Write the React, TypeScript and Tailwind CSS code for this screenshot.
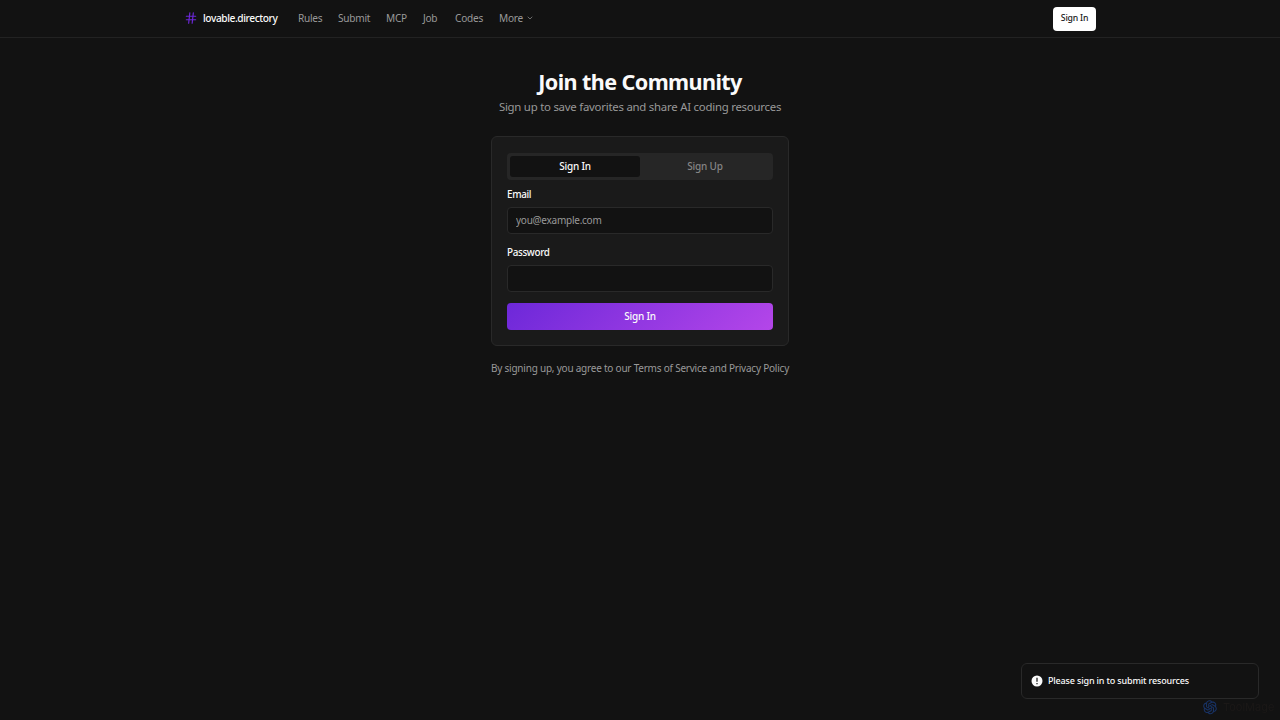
import { ChevronDown, Hash } from "lucide-react"
import { AiOutlineOpenAI } from "react-icons/ai"

const navLinks = [
  { label: "Rules", width: "w-[24px]" },
  { label: "Submit", width: "w-[32px]" },
  { label: "MCP", width: "w-[21px]" },
  { label: "Job", width: "w-[16px]" },
  { label: "Codes", width: "w-[28px]" },
]

const Header = () => (
  <header className="h-[38px] border-b border-[#222222]">
    <div className="mx-auto flex h-[37px] w-[912px] items-center">
      <div className="flex items-center gap-[5px]">
        <Hash className="h-[14px] w-[14px] text-[#6d28d9]" strokeWidth={2} />
        <span className="w-[75px] whitespace-nowrap text-[10.2px] font-medium tracking-[-0.42px] text-[#fafafa]">
          lovable.directory
        </span>
      </div>
      <nav className="ml-[20px] flex items-center gap-[16px] text-[10.1px] tracking-[-0.25px] text-[#999999]">
        {navLinks.map((link) => (
          <a key={link.label} className={`${link.width} whitespace-nowrap`}>
            {link.label}
          </a>
        ))}
        <a className="flex items-center gap-[3px] whitespace-nowrap">
          More
          <ChevronDown className="h-[8px] w-[8px]" strokeWidth={2} />
        </a>
      </nav>
      <button className="ml-auto h-[24px] w-[43px] rounded-[4px] bg-white text-[8.7px] font-medium tracking-[-0.2px] text-[#171717]">
        Sign In
      </button>
    </div>
  </header>
)

const Field = ({ label, type, placeholder }: { label: string; type: string; placeholder?: string }) => (
  <label className="block">
    <span className="block h-[14px] text-[9.9px] leading-[14px] font-medium tracking-[-0.35px] text-[#fafafa]">{label}</span>
    <input
      type={type}
      placeholder={placeholder}
      className="mt-[6px] block h-[27px] w-full rounded-[4px] border border-[#292929] bg-[#121212] px-2 pb-[2px] text-[10px] tracking-[-0.25px] text-[#fafafa] placeholder:text-[#999999]"
    />
  </label>
)

const LoginCard = () => (
  <div className="mt-[20px] h-[210px] w-[298.67px] rounded-[6px] border border-[#292929] bg-[#1a1a1a] px-[15.33px] pt-[16px]">
    <div className="grid h-[27px] grid-cols-2 rounded-[4px] bg-[#262626] p-[3px] text-[10px] font-medium tracking-[-0.22px]">
      <button className="rounded-[3px] bg-[#121212] text-[#fafafa]">Sign In</button>
      <button className="text-[#858585]">Sign Up</button>
    </div>
    <div className="mt-[7px] flex flex-col gap-[11px]">
      <Field label="Email" type="email" placeholder="you@example.com" />
      <Field label="Password" type="password" />
      <button className="h-[27px] rounded-[4px] bg-[linear-gradient(135deg,#6d28d9,#b446e9)] pb-px text-[10px] font-medium tracking-[-0.22px] text-[#fafafa]">
        Sign In
      </button>
    </div>
  </div>
)

const Toast = () => (
  <div className="fixed right-[21px] bottom-[21px] flex h-[36px] w-[238px] items-center gap-[5px] rounded-[6px] border border-[#292929] bg-[#121212] pl-[9px] text-[9px] font-medium tracking-[-0.16px] text-[#fafafa]">
    <svg viewBox="0 0 12 12" className="h-[12px] w-[12px]">
      <circle cx="6" cy="6" r="5.5" fill="#fafafa" />
      <path d="M6 2.7v4M6 8v1.3" stroke="#121212" strokeWidth="1.2" />
    </svg>
    <span className="whitespace-nowrap">Please sign in to submit resources</span>
  </div>
)

const Watermark = () => (
  <div className="fixed right-[4px] bottom-[4px] flex h-[18px] w-[75px] items-center gap-[4px]">
    <AiOutlineOpenAI className="h-[18px] w-[18px] shrink-0 text-[#183264]" />
    <span className="font-['Inter'] text-[11px] text-[#1b1817]">ToolMage</span>
  </div>
)

export default function App() {
  return (
    <div className="min-h-screen bg-[#121212] font-['Noto_Sans',sans-serif]">
      <Header />
      <main className="flex flex-col items-center pt-[28px]">
        <h1 className="h-[32px] whitespace-nowrap text-[21.6px] leading-[31px] font-bold tracking-[-0.6px] text-[#fafafa]">
          Join the Community
        </h1>
        <p className="h-[18px] whitespace-nowrap text-[11.4px] leading-[18px] tracking-[-0.24px] text-[#999999]">
          Sign up to save favorites and share AI coding resources
        </p>
        <LoginCard />
        <p className="mt-[14px] whitespace-nowrap text-[10px] leading-[16px] tracking-[-0.22px] text-[#999999]">
          By signing up, you agree to our Terms of Service and Privacy Policy
        </p>
      </main>
      <Toast />
      <Watermark />
    </div>
  )
}
